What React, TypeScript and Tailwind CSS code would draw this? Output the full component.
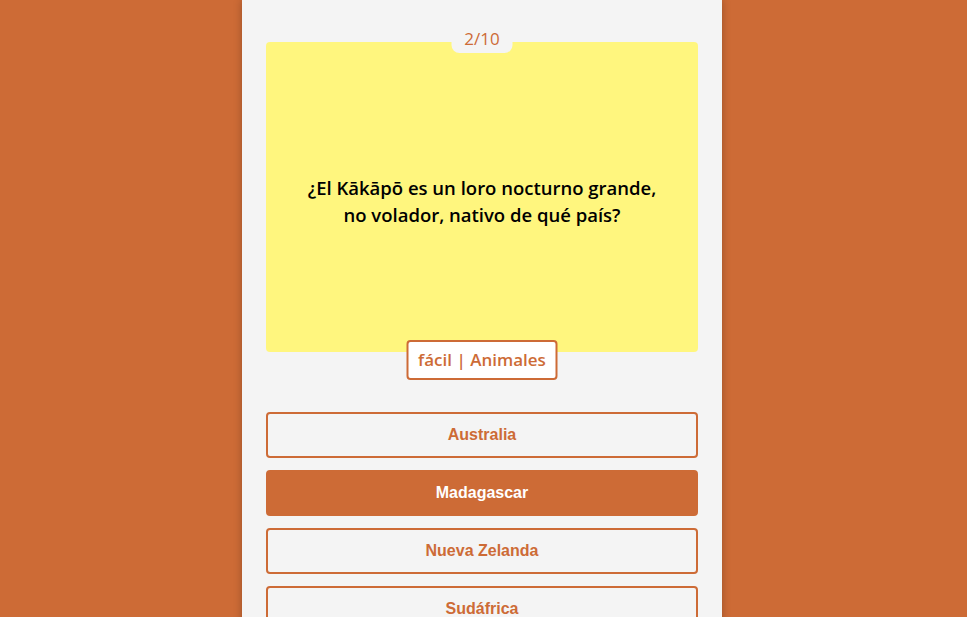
const options = ['Australia', 'Madagascar', 'Nueva Zelanda', 'Sudáfrica']
const selected = 'Madagascar'

export default function App() {
  return (
    <div className="min-h-screen bg-[#cd6b36] flex justify-center">
      <div className="w-[480px] mr-[3px] min-h-screen bg-[#f4f4f4] px-6 pt-[42px] pb-10 shadow-[0_0_8px_rgba(0,0,0,0.25)]">
        {/* Question card */}
        <div className="relative h-[310px] rounded bg-[#fff67e] flex items-center justify-center px-[30px] pt-[7px]">
          <div className="absolute left-1/2 -translate-x-1/2 -top-[20px] h-[31px] w-[61px] rounded-b-lg bg-[#f4f4f4] flex items-center justify-center">
            <span className="text-[17px] text-[#cd6b36] font-['Open_Sans',sans-serif] leading-none pt-[1px]">2/10</span>
          </div>
          <p className="max-w-[362px] text-center text-[18.5px] leading-[27px] font-semibold text-black font-['Open_Sans',sans-serif]">
            ¿El Kākāpō es un loro nocturno grande, no volador, nativo de qué país?
          </p>
          <div className="absolute left-1/2 -translate-x-1/2 -bottom-[28px] h-[40px] w-[151px] rounded bg-white border-2 border-[#cd6b36] flex items-center justify-center">
            <span className="text-[17px] font-semibold text-[#cd6b36] whitespace-nowrap font-['Open_Sans',sans-serif]">fácil | Animales</span>
          </div>
        </div>

        {/* Answers */}
        <div className="mt-[60px] flex flex-col gap-3">
          {options.map((opt) => (
            <button
              key={opt}
              className={
                opt === selected
                  ? 'h-[46px] w-full rounded bg-[#cd6b36] border-2 border-[#cd6b36] text-white text-[16px] font-bold font-["Liberation_Sans",Arial,sans-serif]'
                  : 'h-[46px] w-full rounded bg-[#f4f4f4] border-2 border-[#cd6b36] text-[#cd6b36] text-[16px] font-bold font-["Liberation_Sans",Arial,sans-serif]'
              }
            >
              {opt}
            </button>
          ))}
        </div>
      </div>
    </div>
  )
}
